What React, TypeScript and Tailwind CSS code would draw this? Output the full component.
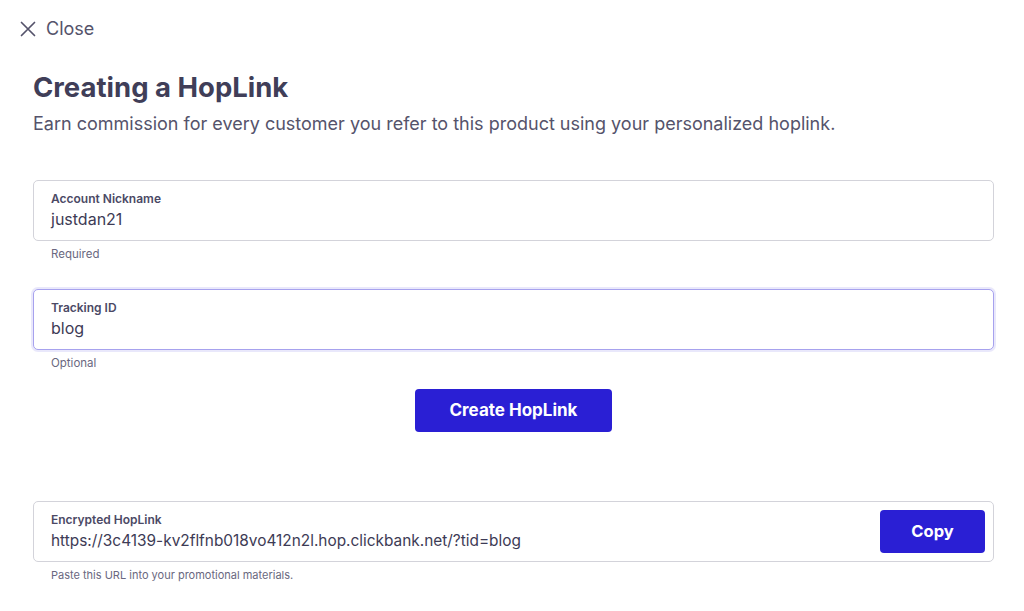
const font = { fontFamily: 'Inter, "Noto Sans", sans-serif' };

function Field({
  label,
  value,
  hint,
  focused,
}: {
  label: string;
  value: string;
  hint: string;
  focused?: boolean;
}) {
  return (
    <div>
      <div
        className={`h-[61px] rounded-[5px] border bg-white px-[17px] pt-[10px] ${
          focused
            ? 'border-[#a7a2ee] shadow-[0_0_0_2px_rgba(167,162,238,0.25)]'
            : 'border-[#d3d3da]'
        }`}
      >
        <div className="text-[12px] font-semibold leading-[15px] text-[#4b4965]">{label}</div>
        <div className="mt-[3px] text-[16px] leading-[20px] text-[#3d3b55]">{value}</div>
      </div>
      <div className="mt-[6px] pl-[18px] text-[11.5px] leading-[14px] text-[#6a6880]">{hint}</div>
    </div>
  );
}

export default function App() {
  return (
    <div className="min-h-[611px] w-[1024px] bg-white text-[#44425c]" style={font}>
      <div className="flex items-center gap-[10px] pl-[20px] pt-[19px]">
        <svg width="16" height="16" viewBox="0 0 16 16" className="text-[#55536b]">
          <path d="M1.5 1.5 L14.5 14.5 M14.5 1.5 L1.5 14.5" stroke="currentColor" strokeWidth="1.7" strokeLinecap="round" />
        </svg>
        <span className="text-[18px] leading-[20px] text-[#55536b]">Close</span>
      </div>

      <div className="pl-[33px] pr-[30px]">
        <h1 className="mt-[31px] text-[27.5px] font-bold leading-[34px] text-[#403e58]">
          Creating a HopLink
        </h1>
        <p className="mt-[9px] text-[18px] leading-[22px] text-[#55536b]">
          Earn commission for every customer you refer to this product using your personalized hoplink.
        </p>

        <div className="mt-[45px]">
          <Field label="Account Nickname" value="justdan21" hint="Required" />
        </div>
        <div className="mt-[28px]">
          <Field label="Tracking ID" value="blog" hint="Optional" focused />
        </div>

        <div className="mt-[19px] flex justify-center">
          <button className="h-[43px] w-[197px] rounded-[4px] bg-[#2a1fd4] text-[17px] font-bold text-white">
            Create HopLink
          </button>
        </div>

        <div className="mt-[69px]">
          <div className="flex h-[61px] items-center justify-between rounded-[5px] border border-[#d3d3da] bg-white pl-[17px] pr-[8px]">
            <div>
              <div className="text-[12px] font-semibold leading-[15px] text-[#4b4965]">Encrypted HopLink</div>
              <div className="mt-[4px] text-[15.4px] leading-[20px] text-[#3d3b55]">
                https://3c4139-kv2flfnb018vo412n2l.hop.clickbank.net/?tid=blog
              </div>
            </div>
            <button className="h-[43px] w-[105px] rounded-[4px] bg-[#2a1fd4] text-[16.5px] font-bold text-white">
              Copy
            </button>
          </div>
          <div className="mt-[6px] pl-[18px] text-[11px] leading-[14px] text-[#6a6880]">
            Paste this URL into your promotional materials.
          </div>
        </div>
      </div>
    </div>
  );
}
